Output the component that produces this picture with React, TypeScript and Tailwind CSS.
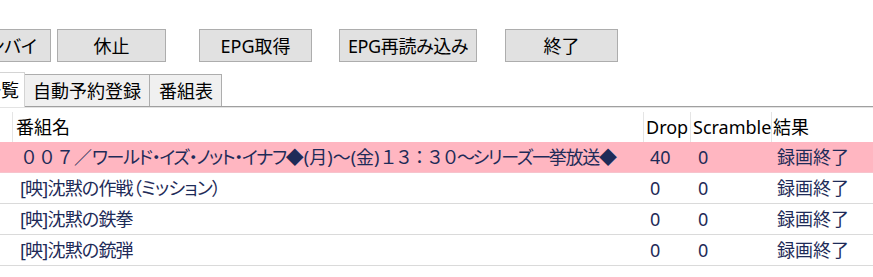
import React from "react";

const cols = "grid grid-cols-[13px_631px_47px_81px_101px]";

function Btn({ label, cls }: { label: string; cls: string }) {
  return (
    <div
      className={`h-[33px] shrink-0 flex items-center justify-center border border-[#adadad] bg-[#e1e1e1] leading-none ${cls}`}
    >
      <span className="leading-none">{label}</span>
    </div>
  );
}

const rows = [
  { name: "", drop: "40", scr: "0", res: "録画終了", pink: true },
  { name: "[映]沈黙の作戦（ミッション）", drop: "0", scr: "0", res: "録画終了", pink: false },
  { name: "[映]沈黙の鉄拳", drop: "0", scr: "0", res: "録画終了", pink: false },
  { name: "[映]沈黙の銃弾", drop: "0", scr: "0", res: "録画終了", pink: false },
];

export default function App() {
  return (
    <div className="w-[873px] h-[277px] bg-white overflow-hidden text-black text-[18px] font-['Noto_Sans','Noto_Sans_CJK_JP',sans-serif] [font-feature-settings:'palt']">
      {/* buttons */}
      <div className="flex pt-[29px]">
        <Btn label="スタンバイ" cls="ml-[-58px] w-[109px]" />
        <Btn label="休止" cls="ml-[6px] w-[109px]" />
        <Btn label="EPG取得" cls="ml-[33px] w-[113px]" />
        <Btn label="EPG再読み込み" cls="ml-[27px] w-[138px] tracking-[-0.4px]" />
        <Btn label="終了" cls="ml-[28px] w-[113px]" />
      </div>
      {/* tabs */}
      <div className="mt-[10px] flex items-end h-[35px] border-b border-[#a0a0a0]">
        <div className="ml-[-90px] w-[115px] h-[35px] -mb-px bg-white border-t border-r border-[#d4d4d4] flex items-center justify-end pr-[5px] relative z-10">
          <span className="leading-none">録画済み一覧</span>
        </div>
        <div className="h-[32px] bg-[#f0f0f0] border-t border-r border-[#adadad] flex items-center pl-[8px] pr-[8px]">
          <span className="leading-none">自動予約登録</span>
        </div>
        <div className="h-[32px] bg-[#f0f0f0] border-t border-r border-[#adadad] flex items-center pl-[9px] pr-[8px]">
          <span className="leading-none">番組表</span>
        </div>
      </div>
      <div className="h-px bg-[#e3e3e3]" />
      {/* list */}
      <div className="mt-[4px]">
        <div className={`${cols} h-[30px] bg-white`}>
          <div className="border-r border-[#e5e5e5]" />
          <div className="border-r border-[#e5e5e5] flex items-center pl-[3px]">番組名</div>
          <div className="border-r border-[#e5e5e5] flex items-center pl-[2px]">Drop</div>
          <div className="border-r border-[#e5e5e5] flex items-center pl-[2px]">Scramble</div>
          <div className="flex items-center pl-[1px]">結果</div>
        </div>
        {rows.map((r, i) => (
          <div
            key={i}
            className={`${cols} h-[31px] border-b text-[#1e2b58] ${
              r.pink ? "bg-[#ffb6c1] border-[#f7c3cc]" : "bg-white border-[#dadada]"
            }`}
          >
            <div />
            <div className="flex items-center pl-[7px] whitespace-nowrap overflow-hidden">
              {r.pink ? (
                <span>
                  <span className="[font-feature-settings:normal]">００７</span>／
                  <span className="tracking-[-1.3px]">ワールド・イズ・ノット・イナフ</span>
                  ◆(月)～(金)
                  <span className="[font-feature-settings:normal] tracking-[-2.5px]">１３：３０～</span>
                  <span className="tracking-[-1.3px]">シリーズ一挙放送◆</span>
                </span>
              ) : (
                <span className="tracking-[-0.8px]">{r.name}</span>
              )}
            </div>
            <div className="flex items-center pl-[6px]">{r.drop}</div>
            <div className="flex items-center pl-[7px]">{r.scr}</div>
            <div className="flex items-center pl-[5px]">{r.res}</div>
          </div>
        ))}
      </div>
    </div>
  );
}
